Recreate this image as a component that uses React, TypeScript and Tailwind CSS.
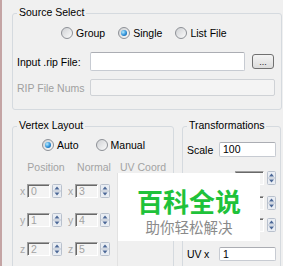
import React from "react";

function Radio({ label, checked }: { label: string; checked?: boolean }) {
    return (
        <label className="flex items-center gap-[3px] h-[13px]">
            <span className="w-[12px] h-[12px] rounded-full border border-[#8d9096] bg-[linear-gradient(135deg,#cfd1d4,#fbfbfb)] flex items-center justify-center">
                {checked && (
                    <span className="w-[6px] h-[6px] rounded-full bg-[radial-gradient(circle_at_35%_35%,#b6ecff,#2c8fd8_55%,#0b4c8a)]" />
                )}
            </span>
            <span>{label}</span>
        </label>
    );
}

function Spin({ width = 10 }: { width?: number }) {
    return (
        <svg width={width} height="14" viewBox={`0 0 ${width} 14`} className="shrink-0">
            <rect x="0.5" y="0.5" width={width - 1} height="13" rx="1" fill="#e9edf3" stroke="#b9c1cd" />
            <line x1="1" y1="7" x2={width - 1} y2="7" stroke="#b9c1cd" />
            <path d={`M${width / 2} 2.5 L${width / 2 + 2.5} 5.5 L${width / 2 - 2.5} 5.5 Z`} fill="#4b6796" />
            <path d={`M${width / 2 - 2.5} 8.5 L${width / 2 + 2.5} 8.5 L${width / 2} 11.5 Z`} fill="#4b6796" />
        </svg>
    );
}

function Sunken({ value, className }: { value?: string; className: string }) {
    return (
        <div
            className={`h-[14px] border-t border-l border-[#a0a0a0] border-r-white border-b-white border-r border-b bg-[#f4f4f4] shadow-[inset_1px_1px_0_#696969] pl-[3px] text-[#a3a3a3] leading-[12px] ${className}`}
        >
            {value}
        </div>
    );
}

function SpinField({ axis, value }: { axis: string; value: string }) {
    return (
        <div className="flex items-center w-[48px]">
            <span className="w-[7px] text-[#a8a8a8] leading-[12px]">{axis}</span>
            <Sunken value={value} className="w-[23px]" />
            <span className="ml-[2px]">
                <Spin />
            </span>
        </div>
    );
}

function TransformSpin({ className }: { className: string }) {
    return (
        <div className={`flex items-center h-[14px] pl-[52px] ${className}`}>
            <Sunken className="w-[29px]" />
            <span className="ml-[3px]">
                <Spin width={9} />
            </span>
        </div>
    );
}

function GroupBox({
    title,
    className,
    children,
}: {
    title: string;
    className: string;
    children: React.ReactNode;
}) {
    return (
        <div className={`relative border border-[#d5dadf] rounded-[3px] ${className}`}>
            <span className="absolute left-[4px] top-[-8px] px-[2px] bg-[#f0f0f0] leading-[12px]">
                {title}
            </span>
            {children}
        </div>
    );
}

export default function App() {
    const rows = [
        { p: ["x", "0"], n: ["x", "3"] },
        { p: ["y", "1"], n: ["y", "4"] },
        { p: ["z", "2"], n: ["z", "5"] },
    ];

    return (
        <div className="relative w-[283px] h-[266px] overflow-hidden bg-[#f0f0f0] border-l-2 border-[#c4a4a4] text-[10.5px] leading-[12px] text-black font-['Liberation_Sans',Arial,sans-serif]">
            <GroupBox title="Source Select" className="mt-[13px] ml-[10px] w-[270px] h-[97px]">
                <div className="pt-[12px] pl-[48px] flex gap-[13px]">
                    <Radio label="Group" />
                    <Radio label="Single" checked />
                    <Radio label="List File" />
                </div>

                <div className="mt-[13px] pl-[4px] flex items-center h-[19px]">
                    <span className="w-[73px]">Input .rip File:</span>
                    <div className="w-[155px] h-[19px] bg-white border border-[#c7cbd2] border-t-[#abadb3] rounded-[2px]" />
                    <button className="ml-[7px] w-[22px] h-[15px] rounded-[3px] border border-[#707070] bg-[linear-gradient(#f4f4f4,#dcdcdc)] text-[9px] leading-[14px] text-[#222]">
                        ...
                    </button>
                </div>

                <div className="mt-[8px] pl-[4px] flex items-center h-[17px]">
                    <span className="w-[73px] text-[#a0a0a0]">RIP File Nums</span>
                    <div className="w-[185px] h-[17px] bg-[#f4f4f4] border border-[#cfd2d6] rounded-[2px]" />
                </div>
            </GroupBox>

            <div className="flex mt-[16px] ml-[10px]">
                <GroupBox title="Vertex Layout" className="w-[162px] h-[160px]">
                    <div className="pt-[11px] pl-[29px] flex gap-[17px]">
                        <Radio label="Auto" checked />
                        <Radio label="Manual" />
                    </div>

                    <div className="mt-[10px] pl-[7px] flex text-[#a3a3a3]">
                        {["Position", "Normal", "UV Coord"].map((h) => (
                            <span key={h} className="w-[48px] pl-[4px] text-center whitespace-nowrap">
                                {h}
                            </span>
                        ))}
                    </div>

                    <div className="mt-[11px] pl-[7px] flex flex-col gap-[15px]">
                        {rows.map((r, i) => (
                            <div key={i} className="flex h-[14px]">
                                <SpinField axis={r.p[0]} value={r.p[1]} />
                                <SpinField axis={r.n[0]} value={r.n[1]} />
                            </div>
                        ))}
                    </div>
                </GroupBox>

                <GroupBox title="Transformations" className="ml-[8px] w-[99px] h-[160px]">
                    <div className="pt-[15px] pl-[4px] flex items-center h-[30px]">
                        <span className="w-[32px]">Scale</span>
                        <div className="w-[57px] h-[15px] bg-white border border-[#c7cbd2] border-t-[#abadb3] rounded-[2px] pl-[3px] leading-[13px]">
                            100
                        </div>
                    </div>

                    <TransformSpin className="mt-[14px]" />
                    <TransformSpin className="mt-[11px]" />
                    <TransformSpin className="mt-[8px]" />

                    <div className="mt-[15px] pl-[4px] flex items-center h-[14px]">
                        <span className="w-[17px]">UV</span>
                        <span className="w-[15px]">x</span>
                        <div className="w-[57px] h-[14px] bg-white border border-[#c7cbd2] border-t-[#abadb3] rounded-[2px] pl-[3px] leading-[12px]">
                            1
                        </div>
                    </div>
                </GroupBox>
            </div>

            {/* watermark overlay */}
            <div className="absolute left-[115px] top-[173px] bottom-0 w-px bg-[#e2e2e2]" />
            <div className="absolute left-[116px] top-[173px] w-[142px] h-[68px] bg-white flex flex-col items-center pt-[16px] font-['Noto_Sans_CJK_SC',sans-serif]">
                <span className="text-[26px] leading-[24px] font-bold text-[#1fc23a]">百科全说</span>
                <span className="mt-[6px] text-[14.5px] leading-[15px] text-[#8a8a8a]">助你轻松解决</span>
            </div>
        </div>
    );
}
